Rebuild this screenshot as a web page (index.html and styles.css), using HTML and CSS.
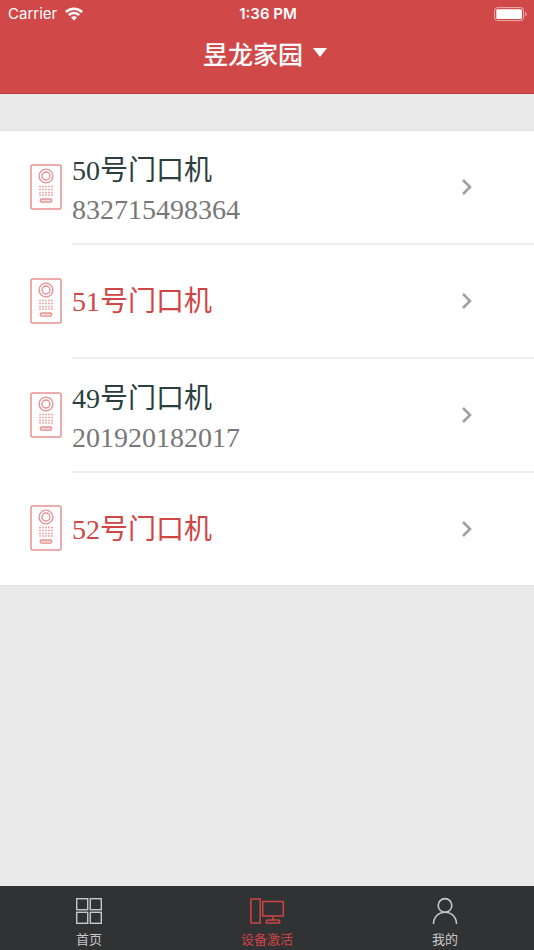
FILE: index.html
```html
<!DOCTYPE html>
<html lang="zh-CN">
<head>
<meta charset="utf-8">
<meta name="viewport" content="width=device-width, initial-scale=1">
<title>设备激活</title>
<link rel="stylesheet" href="styles.css">
</head>
<body>
<svg class="defs" aria-hidden="true">
  <defs>
    <symbol id="door-unit" viewBox="0 0 32 46">
      <rect x="1" y="1" width="30" height="44" rx="1.5" fill="none" stroke="currentColor" stroke-width="1.5"/>
      <circle cx="16" cy="12" r="6.9" fill="none" stroke="currentColor" stroke-width="1.4"/>
      <circle cx="16" cy="12" r="4" fill="none" stroke="currentColor" stroke-width="1.4"/>
      <path d="M9 22.500h14M9 25.500h14M9 28.500h14M9 31h14" fill="none" stroke="currentColor" stroke-width="1.4" stroke-dasharray="2 1" opacity=".75"/>
      <rect x="10.2" y="35" width="11.6" height="3.2" rx="1.6" fill="currentColor" fill-opacity=".3" stroke="currentColor" stroke-width="1.3"/>
    </symbol>
    <symbol id="chevron" viewBox="0 0 12 18">
      <path d="M2 2l7 7-7 7" fill="none" stroke="currentColor" stroke-width="2.6"/>
    </symbol>
  </defs>
</svg>
<div class="app">
  <header class="header">
    <div class="status">
      <div class="carrier">
        <span>Carrier</span>
        <svg class="wifi" viewBox="0 0 18 14" aria-hidden="true">
          <g fill="none" stroke="currentColor" stroke-width="2.5">
            <path d="M.9 5a11.6 11.6 0 0 1 16.2 0"/>
            <path d="M3.8 8.200a7.4 7.4 0 0 1 10.4 0"/>
          </g>
          <path d="M9 13.6l-3-3a4.2 4.2 0 0 1 6 0z" fill="currentColor"/>
        </svg>
      </div>
      <time class="clock">1:36 PM</time>
      <svg class="battery" viewBox="0 0 34 15" aria-hidden="true">
        <rect x=".6" y=".6" width="29" height="13" rx="3" fill="none" stroke="currentColor" opacity=".55"/>
        <rect x="2.3" y="2.3" width="25.6" height="9.6" rx="1.2" fill="currentColor"/>
        <path d="M31.3 4.7c1.8.8 1.8 4 0 4.8z" fill="currentColor" opacity=".6"/>
      </svg>
    </div>
    <button class="community" type="button">
      <span>昱龙家园</span>
      <svg class="caret" viewBox="0 0 14 9" aria-hidden="true"><path d="M0 0h14L7 9z" fill="currentColor"/></svg>
    </button>
  </header>
  <main class="content">
    <ul class="devices">
      <li class="device">
        <svg class="unit" aria-hidden="true"><use href="#door-unit"/></svg>
        <a class="row" href="#50">
          <span class="text"><span class="name">50号门口机</span><span class="serial">832715498364</span></span>
          <svg class="chevron" aria-hidden="true"><use href="#chevron"/></svg>
        </a>
      </li>
      <li class="device inactive">
        <svg class="unit" aria-hidden="true"><use href="#door-unit"/></svg>
        <a class="row" href="#51">
          <span class="text"><span class="name">51号门口机</span></span>
          <svg class="chevron" aria-hidden="true"><use href="#chevron"/></svg>
        </a>
      </li>
      <li class="device">
        <svg class="unit" aria-hidden="true"><use href="#door-unit"/></svg>
        <a class="row" href="#49">
          <span class="text"><span class="name">49号门口机</span><span class="serial">201920182017</span></span>
          <svg class="chevron" aria-hidden="true"><use href="#chevron"/></svg>
        </a>
      </li>
      <li class="device inactive">
        <svg class="unit" aria-hidden="true"><use href="#door-unit"/></svg>
        <a class="row" href="#52">
          <span class="text"><span class="name">52号门口机</span></span>
          <svg class="chevron" aria-hidden="true"><use href="#chevron"/></svg>
        </a>
      </li>
    </ul>
  </main>
  <nav class="tabs">
    <a class="tab" href="#home">
      <svg viewBox="0 0 36 28" aria-hidden="true">
        <g fill="none" stroke="currentColor" stroke-width="1.4">
          <rect x="5.7" y="1.7" width="11" height="11"/><rect x="19.3" y="1.7" width="11" height="11"/>
          <rect x="5.7" y="15.3" width="11" height="11"/><rect x="19.3" y="15.3" width="11" height="11"/>
        </g>
      </svg>
      <span>首页</span>
    </a>
    <a class="tab current" href="#devices" aria-current="page">
      <svg viewBox="0 0 36 28" aria-hidden="true">
        <g fill="none" stroke="currentColor" stroke-width="1.5" stroke-linejoin="round">
          <rect x="1.9" y="2" width="9.3" height="24"/>
          <rect x="13.7" y="4.6" width="20.6" height="14.4"/>
          <path d="M24 19v4M17.3 26v-1.3q0-1.7 1.7-1.7h10q1.7 0 1.7 1.7V26z"/>
        </g>
      </svg>
      <span>设备激活</span>
    </a>
    <a class="tab" href="#me">
      <svg viewBox="0 0 36 28" aria-hidden="true">
        <g fill="none" stroke="currentColor" stroke-width="1.6">
          <circle cx="18" cy="8.4" r="6.8"/>
          <path d="M6.5 27c0-6.800 5-11.800 11.500-11.800S29.500 20.200 29.500 27"/>
        </g>
      </svg>
      <span>我的</span>
    </a>
  </nav>
</div>
</body>
</html>
```
FILE: styles.css
```css
* {
  box-sizing: border-box;
}

body {
  margin: 0;
  background: #eaeaea;
  font-family: "Liberation Serif", "Noto Sans CJK SC", serif;
}

a {
  color: inherit;
  text-decoration: none;
}

svg {
  display: block;
  flex: none;
}

.defs {
  position: absolute;
  width: 0;
  height: 0;
}

.app {
  display: flex;
  flex-direction: column;
  min-height: 100vh;
}

.header {
  padding-bottom: 16px;
  background: #d04848;
  border-bottom: 1px solid #c03c3c;
  color: #fff;
}

.status {
  display: grid;
  grid-template-columns: 1fr auto 1fr;
  align-items: center;
  height: 28px;
  padding: 0 6px 0 8px;
  font: 15px/28px Inter, sans-serif;
}

.carrier {
  display: flex;
  align-items: center;
  gap: 8px;
}

.wifi {
  width: 18px;
  height: 14px;
}

.clock {
  font-weight: 600;
}

.battery {
  justify-self: end;
  width: 34px;
  height: 15px;
}

.community {
  display: flex;
  align-items: center;
  gap: 10px;
  margin: 5px auto 0;
  padding: 0 4px 0 0;
  border: 0;
  background: none;
  color: inherit;
  font: 500 25px/44px Inter, "Noto Sans CJK SC", sans-serif;
}

.caret {
  width: 14px;
  height: 9px;
  margin-bottom: 6px;
}

.content {
  flex: 1;
}

.devices {
  margin: 36px 0 0;
  padding: 0;
  list-style: none;
  background: #fff;
  border: solid #e0e0e0;
  border-width: 1px 0;
}

.device {
  display: flex;
  align-items: center;
  gap: 10px;
  padding-left: 30px;
  color: #2b3f3f;
}

.unit {
  width: 32px;
  height: 46px;
  margin-bottom: 2px;
  color: #e89090;
}

.row {
  flex: 1;
  display: flex;
  align-items: center;
  justify-content: space-between;
  height: 114px;
  padding-right: 61px;
  border-bottom: 2px solid #ececec;
}

.device:last-child .row {
  height: 112px;
  border-bottom: 0;
}

.text {
  display: grid;
  font-size: 28px;
  line-height: 39px;
}

.device:not(.inactive) .text {
  padding-top: 5px;
}

.serial {
  color: #777;
}

.inactive .name {
  color: #d04545;
}

.chevron {
  width: 12px;
  height: 18px;
  color: #a0a0a0;
}

.tabs {
  display: grid;
  grid-template-columns: repeat(3, 1fr);
  height: 64px;
  background: #313234;
  color: #c8c8c8;
}

.tab {
  display: flex;
  flex-direction: column;
  align-items: center;
  gap: 5px;
  padding-top: 11px;
  font: 13px/18px Inter, "Noto Sans CJK SC", sans-serif;
}

.tab svg {
  width: 36px;
  height: 28px;
}

.current {
  color: #d04545;
}
```
